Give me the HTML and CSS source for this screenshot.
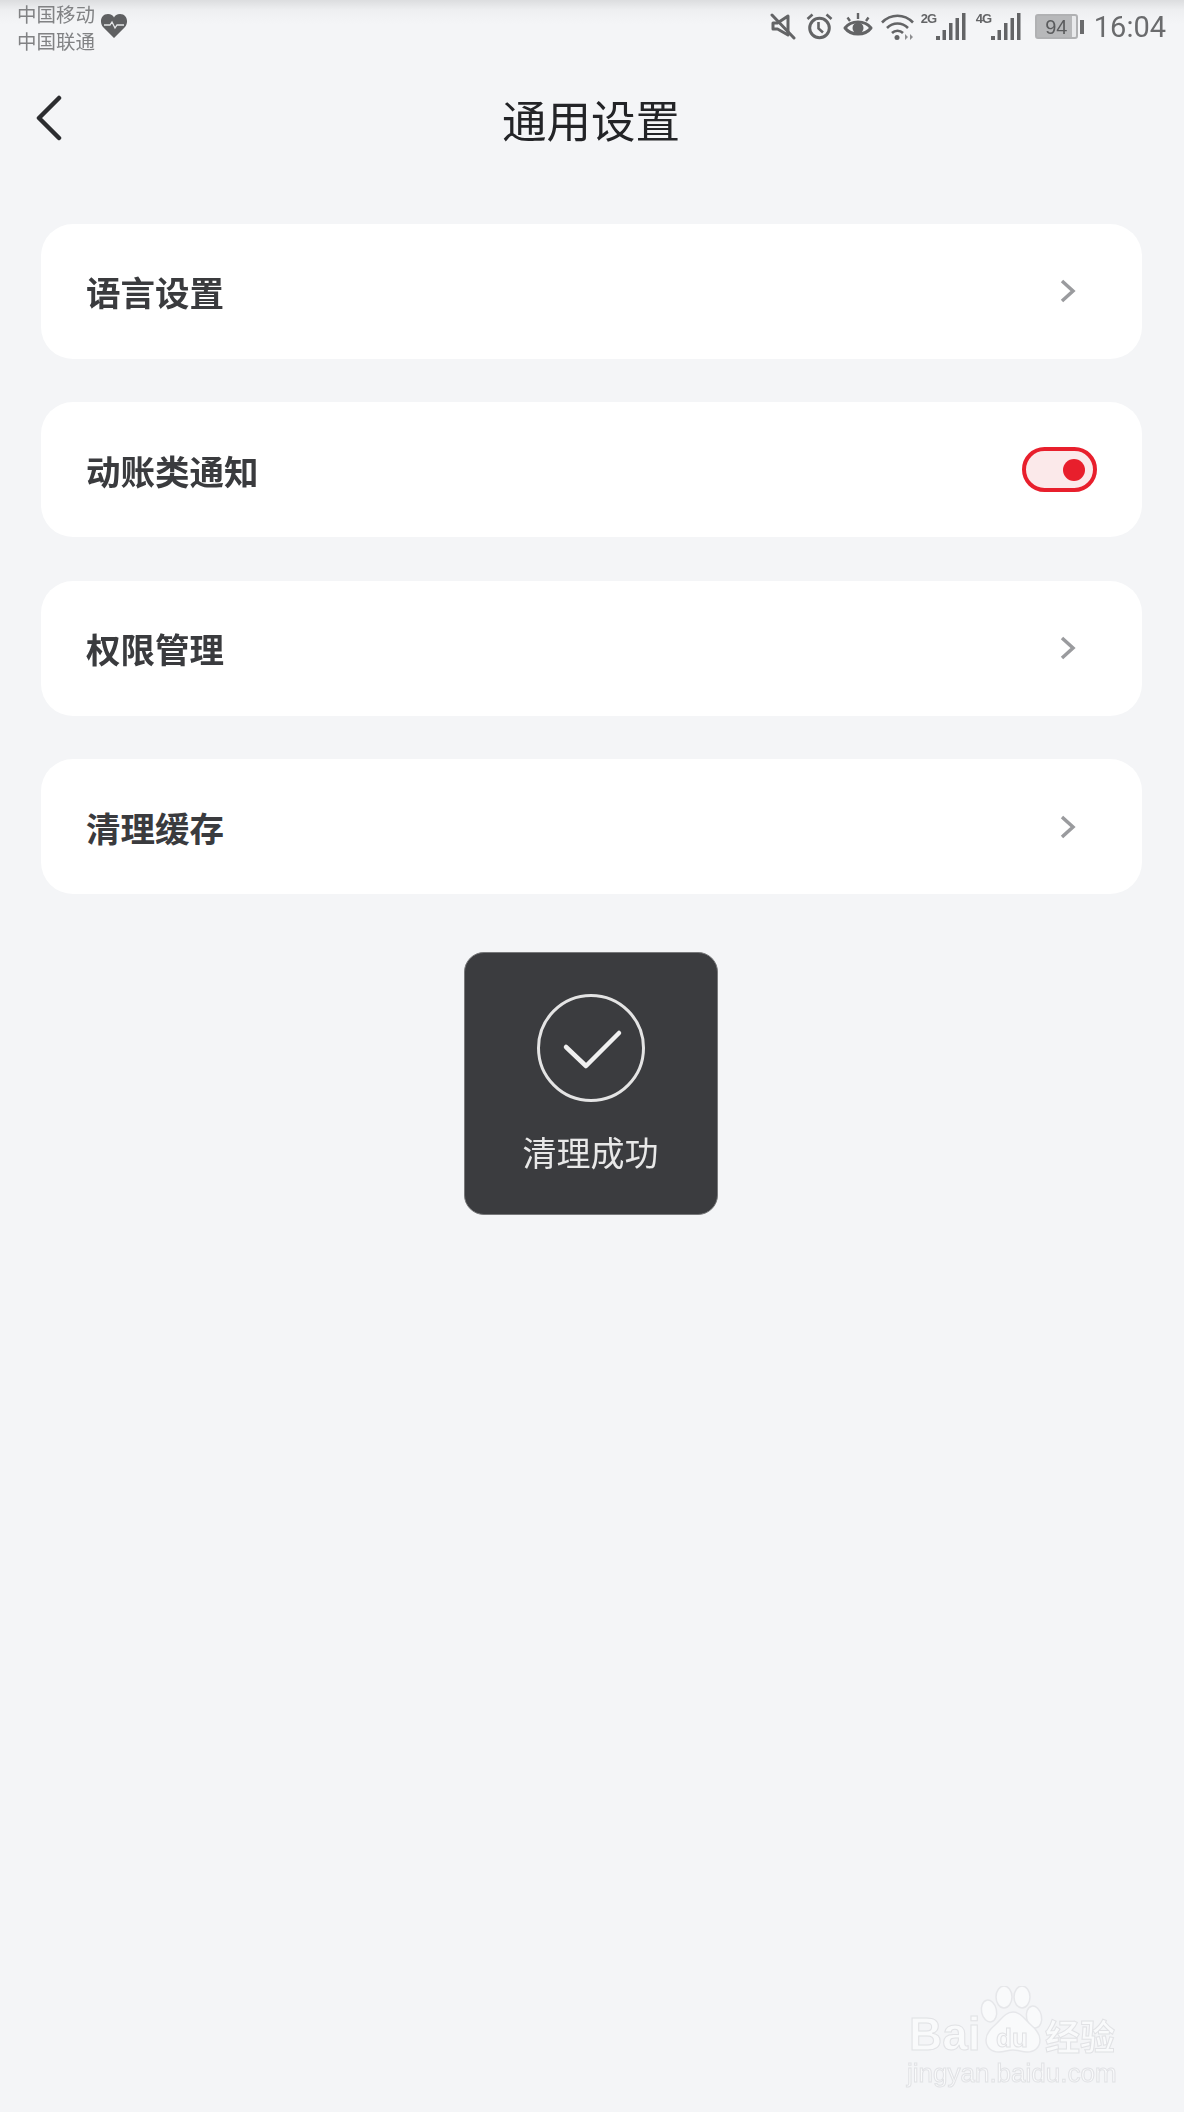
FILE: index.html
```html
<!DOCTYPE html>
<html lang="zh-CN">
<head>
<meta charset="utf-8">
<title>通用设置</title>
<link rel="stylesheet" href="styles.css">
</head>
<body>
<div class="page">
  <header class="status">
    <div class="carrier">
      <div class="carrier-names"><span>中国移动</span><span>中国联通</span></div>
      <svg class="heart" viewBox="0 0 28 26"><path fill="#5f6062" d="M14 25 3 14C-1 9 1 1 8 1c3 0 5 1.500 6 3.500C15 2.500 17 1 20 1c7 0 9 8 5 13z"/><path fill="none" stroke="#e6e7e9" stroke-width="1.300" d="M4 12h6l2-3 3 6 2-3h7"/></svg>
    </div>
    <div class="indicators">
      <svg class="ic-mute" viewBox="0 0 26 27"><path fill="none" stroke="#636466" stroke-width="3" stroke-linejoin="round" d="M3 10h4.500L18 3v19L7.500 16H3z"/><path stroke="#636466" stroke-width="3" stroke-linecap="round" d="M2 2l22 23"/></svg>
      <svg class="ic-alarm" viewBox="0 0 27 27"><circle cx="13.500" cy="15" r="9.800" fill="none" stroke="#636466" stroke-width="3"/><path fill="none" stroke="#636466" stroke-width="2.600" d="M12.500 9v6.500l4.500 4M1.500 6l5-4.500M25.500 6l-5-4.500"/></svg>
      <svg class="ic-eye" viewBox="0 0 30 24"><path fill="none" stroke="#636466" stroke-width="3" stroke-linejoin="round" d="M2 15c6-8 20-8 26 0-6 8-20 8-26 0z"/><path fill="none" stroke="#636466" stroke-width="2.400" d="M7 8 4.500 4.500M15 6V0M23 8l2.500-3.500"/><circle cx="15" cy="15" r="5.500" fill="#636466"/></svg>
      <svg class="ic-wifi" viewBox="0 0 33 27"><path fill="none" stroke="#636466" stroke-width="2.600" d="M1 9.500c9-9 22-9 31 0M6 15c6-6 15-6 21 0M11 20c3-3 8-3 11 0"/><circle cx="16" cy="24.500" r="2.500" fill="#636466"/><path fill="#8d8e90" d="M24 21l3 3-3 3zM29 21l3 3-3 3z"/></svg>
      <span class="net">2G</span>
      <svg class="ic-signal" viewBox="0 0 30 27"><g fill="#636466"><rect x="0" y="23" width="4" height="4"/><rect x="6.500" y="17" width="3.500" height="10"/><rect x="13" y="10" width="3.500" height="17"/><rect x="19.500" y="5" width="3.500" height="22"/><rect x="26" y="0" width="3.500" height="27"/></g></svg>
      <span class="net net-4g">4G</span>
      <svg class="ic-signal" viewBox="0 0 30 27"><g fill="#636466"><rect x="0" y="23" width="4" height="4"/><rect x="6.500" y="17" width="3.500" height="10"/><rect x="13" y="10" width="3.500" height="17"/><rect x="19.500" y="5" width="3.500" height="22"/><rect x="26" y="0" width="3.500" height="27"/></g></svg>
      <div class="battery"><span class="battery-level">94</span></div>
      <span class="battery-nub"></span>
      <span class="clock">16:04</span>
    </div>
  </header>

  <nav class="nav">
    <svg class="back" viewBox="0 0 28 46"><path fill="none" stroke="#2c2d30" stroke-width="4.500" stroke-linecap="round" stroke-linejoin="round" d="M24 3 4 23l20 20"/></svg>
    <h1 class="title">通用设置</h1>
  </nav>

  <main class="list">
    <div class="row"><span class="row-label">语言设置</span><svg class="chevron" viewBox="0 0 16 24"><path fill="none" stroke="#9a9b9e" stroke-width="3.500" d="M2 2l11 10L2 22"/></svg></div>
    <div class="row"><span class="row-label">动账类通知</span><span class="switch"><span class="knob"></span></span></div>
    <div class="row"><span class="row-label">权限管理</span><svg class="chevron" viewBox="0 0 16 24"><path fill="none" stroke="#9a9b9e" stroke-width="3.500" d="M2 2l11 10L2 22"/></svg></div>
    <div class="row"><span class="row-label">清理缓存</span><svg class="chevron" viewBox="0 0 16 24"><path fill="none" stroke="#9a9b9e" stroke-width="3.500" d="M2 2l11 10L2 22"/></svg></div>
  </main>

  <div class="toast">
    <svg class="toast-icon" viewBox="0 0 108 108"><circle cx="54" cy="54" r="52.500" fill="none" stroke="#e4e4e4" stroke-width="3"/><path fill="none" stroke="#f0f0f0" stroke-width="4.500" stroke-linecap="round" stroke-linejoin="round" d="M29 53l20 19 33-33"/></svg>
    <span class="toast-text">清理成功</span>
  </div>

  <div class="watermark">
    <svg class="paw" viewBox="0 0 216 70"><g fill="#f9fafb" stroke="#e6e7ea" stroke-width="1.500"><ellipse cx="81" cy="25" rx="7.500" ry="11" transform="rotate(-12 81 25)"/><ellipse cx="96" cy="11" rx="8" ry="11"/><ellipse cx="114" cy="11" rx="8" ry="11"/><ellipse cx="126" cy="31" rx="7.500" ry="11" transform="rotate(-12 126 31)"/><path d="M105 26c8 0 12 8 18 13 6 5 9 10 9 15 0 8-6 12-13 12-5 0-9-2-14-2s-9 2-14 2c-7 0-13-4-13-12 0-5 3-10 9-15 6-5 10-13 18-13z"/></g></svg>
    <span class="wm-baidu">Bai</span>
    <span class="wm-du">du</span>
    <span class="wm-cn">经验</span>
    <span class="wm-url">jingyan.baidu.com</span>
  </div>
</div>
</body>
</html>
```
FILE: styles.css
```css
* { box-sizing: border-box; }
html, body { margin: 0; padding: 0; }
body {
  width: 1184px;
  height: 2112px;
  overflow: hidden;
  background: #f4f5f7;
  font-family: "Noto Sans CJK SC", "Liberation Sans", sans-serif;
}
.page {
  position: relative;
  width: 1184px;
  height: 2112px;
  display: flex;
  flex-direction: column;
  background: linear-gradient(#dcdddf 0, #eeeff1 10px, #f4f5f7 24px);
  filter: blur(0.5px);
}
.status {
  height: 56px;
  display: flex;
  justify-content: space-between;
  padding: 0 18px 0 17px;
  color: #77787a;
}
.carrier { display: flex; align-items: flex-start; }
.carrier-names {
  display: flex;
  flex-direction: column;
  font-size: 19.500px;
  line-height: 27px;
  color: #818284;
}
.heart { width: 28px; height: 26px; margin: 13px 0 0 5px; }
.indicators { display: flex; align-items: flex-start; padding-top: 13px; }
.indicators svg { display: block; flex: none; }
.ic-mute { width: 26px; height: 27px; }
.ic-alarm { width: 27px; height: 27px; margin-left: 10px; }
.ic-eye { width: 30px; height: 24px; margin-left: 10px; }
.ic-wifi { width: 33px; height: 27px; margin-left: 8px; }
.net {
  width: 15px;
  margin-left: 7px;
  font-family: "Liberation Sans", sans-serif;
  font-size: 13px;
  font-weight: 700;
  line-height: 12px;
  letter-spacing: -1px;
  color: #636466;
}
.net-4g { margin-left: 10px; }
.ic-signal { width: 30px; height: 27px; }
.battery {
  width: 43px;
  height: 25px;
  margin-left: 14px;
  margin-top: 1px;
  border: 2px solid #b0b1b3;
  border-radius: 3px;
  background: linear-gradient(90deg, #b7b8ba 90%, #e8e9eb 90%);
  display: flex;
  align-items: center;
  justify-content: center;
}
.battery-level {
  font-family: "Liberation Sans", sans-serif;
  font-size: 20px;
  line-height: 1;
  color: #5a5b5d;
}
.battery-nub {
  width: 4px;
  height: 14px;
  margin: 7px 0 0 2px;
  background: #6a6b6d;
}
.clock {
  margin-left: 10px;
  margin-top: -1px;
  font-family: "Roboto", sans-serif;
  font-size: 29px;
  line-height: 30px;
  color: #6a6b6d;
}
.nav {
  height: 64px;
  margin-top: 31px;
  position: relative;
  display: flex;
  justify-content: center;
  align-items: center;
  padding-right: 2px;
}
.back { position: absolute; left: 35px; top: 8px; width: 28px; height: 46px; }
.title {
  margin: 0;
  font-size: 44.500px;
  font-weight: 400;
  line-height: 64px;
  color: #232427;
}
.list {
  display: flex;
  flex-direction: column;
  gap: 43.500px;
  margin: 72.500px 42px 0 41px;
}
.row {
  height: 135px;
  padding: 0 45px;
  display: flex;
  align-items: center;
  justify-content: space-between;
  background: #fff;
  border-radius: 32px;
}
.row-label {
  font-size: 34.500px;
  font-weight: 700;
  line-height: 48px;
  color: #3a3b3e;
}
.chevron { width: 16px; height: 24px; margin-right: 21px; }
.switch {
  width: 75px;
  height: 45px;
  display: flex;
  align-items: center;
  justify-content: flex-end;
  padding-right: 8px;
  border: 4px solid #e81f2c;
  border-radius: 23px;
  background: #fbe9ea;
}
.knob { width: 22px; height: 22px; border-radius: 50%; background: #e81f2c; }
.toast {
  align-self: center;
  width: 254px;
  height: 263px;
  margin: 57.500px 3px 0 0;
  padding-top: 41px;
  display: flex;
  flex-direction: column;
  align-items: center;
  background: #3b3c3f;
  border: 1px solid #77787a;
  border-radius: 20px;
}
.toast-icon { width: 108px; height: 108px; }
.toast-text {
  margin-top: 26px;
  font-size: 34px;
  line-height: 48px;
  color: #e8e8e8;
}
.watermark {
  position: absolute;
  left: 908px;
  top: 1986px;
  width: 216px;
  height: 104px;
  color: #f9fafb;
  font-family: "Liberation Sans", sans-serif;
  -webkit-text-stroke: 1px #e1e2e5;
}
.paw { position: absolute; left: 0; top: 0; width: 216px; height: 70px; }
.wm-baidu {
  position: absolute;
  left: 1px;
  top: 25px;
  font-size: 46px;
  font-weight: 700;
  line-height: 46px;
}
.wm-du {
  position: absolute;
  left: 88px;
  top: 39px;
  font-size: 26px;
  font-weight: 700;
  line-height: 26px;
}
.wm-cn {
  position: absolute;
  left: 137px;
  top: 29px;
  font-family: "Noto Sans CJK SC", sans-serif;
  font-size: 35px;
  font-weight: 700;
  line-height: 40px;
}
.wm-url {
  position: absolute;
  left: -1px;
  top: 72px;
  font-size: 26px;
  line-height: 30px;
  white-space: nowrap;
}
```
